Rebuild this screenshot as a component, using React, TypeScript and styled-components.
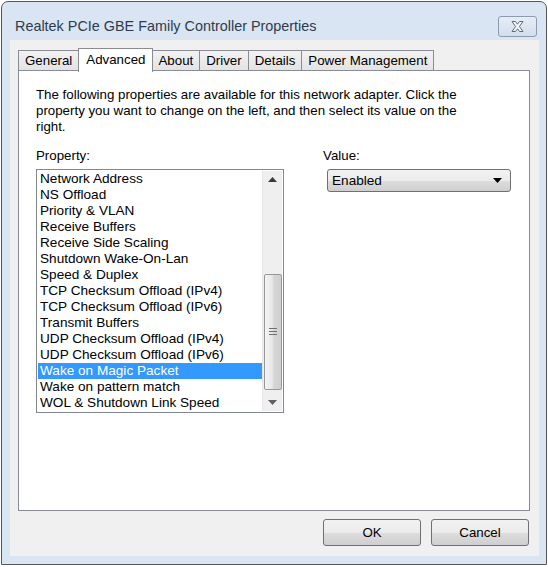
import React from 'react';
import styled, { createGlobalStyle } from 'styled-components';

const Global = createGlobalStyle`
  html, body {
    margin: 0;
    padding: 0;
    background: #ffffff;
  }
  body {
    font-family: "Liberation Sans", Arial, sans-serif;
  }
`;

const Window = styled.div`
  box-sizing: border-box;
  margin: 1px 0 0 1px;
  width: 546px;
  height: 564px;
  border: 1px solid #565656;
  border-radius: 7px 7px 0 0;
  background: #d9e5f3;
  display: flex;
  flex-direction: column;
  padding: 0 7px 8px 8px;
`;

const TitleBar = styled.div`
  height: 38px;
  display: flex;
  align-items: center;
  justify-content: space-between;
  padding-left: 5px;
`;

const Title = styled.span`
  font-size: 14.4px;
  color: #2f3b4c;
  margin-top: 9px;
`;

const CloseButton = styled.div`
  box-sizing: border-box;
  width: 39px;
  height: 21px;
  margin-right: 2px;
  margin-top: 10px;
  border: 1px solid #8d9bb0;
  border-radius: 3px;
  background: linear-gradient(#e6edf6, #d3deeb);
  display: flex;
  align-items: center;
  justify-content: center;
`;

const Client = styled.div`
  flex: 1;
  background: #f0f0f0;
  display: flex;
  flex-direction: column;
  padding: 7px 8px 0 8px;
`;

const TabRow = styled.div`
  display: flex;
  align-items: flex-end;
  height: 24px;
  position: relative;
  z-index: 1;
`;

const Tab = styled.div<{ $active?: boolean }>`
  box-sizing: border-box;
  height: ${(p) => (p.$active ? '24px' : '21px')};
  padding: 0 ${(p) => (p.$active ? '7px' : '6px')};
  margin: ${(p) => (p.$active ? '0 -1px -1px' : '0')};
  border: 1px solid #898c95;
  border-bottom: ${(p) => (p.$active ? 'none' : '1px solid #898c95')};
  border-left-width: ${(p) => (p.$active ? '1px' : '0')};
  background: ${(p) => (p.$active ? '#ffffff' : 'linear-gradient(#f2f2f2, #e3e3e3)')};
  font-size: 13.3px;
  color: #000;
  display: flex;
  align-items: ${(p) => (p.$active ? 'flex-start' : 'center')};
  padding-top: ${(p) => (p.$active ? '3px' : '0')};
  position: relative;
  z-index: ${(p) => (p.$active ? 2 : 1)};
  &:first-child {
    border-left-width: 1px;
  }
`;

const Panel = styled.div`
  box-sizing: border-box;
  width: 512px;
  height: 441px;
  background: #ffffff;
  border: 1px solid #898c95;
  margin-top: -1px;
  padding: 16px 18px 0 17px;
`;

const Description = styled.p`
  margin: 0;
  font-size: 13.3px;
  line-height: 16px;
  color: #000;
  width: 450px;
`;

const Columns = styled.div`
  display: flex;
  margin-top: 13px;
`;

const LeftCol = styled.div`
  width: 289px;
`;

const RightCol = styled.div`
  padding-top: 0;
`;

const Label = styled.div`
  font-size: 13.3px;
  line-height: 16px;
  color: #000;
  margin-bottom: 5px;
`;

const ListBox = styled.div`
  box-sizing: border-box;
  width: 248px;
  height: 244px;
  border: 1px solid #828790;
  display: flex;
  padding: 1px;
`;

const Items = styled.div`
  flex: 1;
  display: flex;
  flex-direction: column;
`;

const Item = styled.div<{ $selected?: boolean }>`
  height: 16px;
  line-height: 16px;
  font-size: 13.6px;
  padding-left: 2px;
  color: ${(p) => (p.$selected ? '#ffffff' : '#000000')};
  background: ${(p) => (p.$selected ? '#3399ff' : 'transparent')};
  white-space: nowrap;
`;

const ScrollBar = styled.div`
  width: 19px;
  background: #efefef;
  border-left: 1px solid #e6e6e6;
  display: flex;
  flex-direction: column;
  align-items: center;
`;

const ArrowCell = styled.div`
  height: 17px;
  width: 100%;
  display: flex;
  align-items: center;
  justify-content: center;
`;

const Track = styled.div`
  flex: 1;
  width: 100%;
  display: flex;
  flex-direction: column;
  justify-content: flex-end;
  align-items: center;
  padding-bottom: 4px;
`;

const Thumb = styled.div`
  box-sizing: border-box;
  width: 18px;
  height: 116px;
  border: 1px solid #979797;
  border-radius: 2px;
  background: linear-gradient(90deg, #f4f4f4 0%, #e8e8e8 45%, #d6d6d6 55%, #cfcfcf 100%);
  display: flex;
  align-items: center;
  justify-content: center;
`;

const Select = styled.div`
  box-sizing: border-box;
  width: 184px;
  height: 23px;
  margin-left: 4px;
  border: 1px solid #707070;
  border-radius: 3px;
  background: linear-gradient(#f2f2f2 0%, #ebebeb 50%, #dddddd 51%, #cfcfcf 100%);
  display: flex;
  align-items: center;
  justify-content: space-between;
  padding: 0 8px 0 4px;
  font-size: 13.6px;
  color: #000;
`;

const ButtonRow = styled.div`
  display: flex;
  justify-content: flex-end;
  gap: 10px;
  padding: 8px 2px 0 0;
`;

const Button = styled.div`
  box-sizing: border-box;
  width: 98px;
  height: 27px;
  border: 1px solid #707070;
  border-radius: 3px;
  background: linear-gradient(#f2f2f2 0%, #ebebeb 50%, #dddddd 51%, #cfcfcf 100%);
  display: flex;
  align-items: center;
  justify-content: center;
  font-size: 13.3px;
  color: #000;
`;

const UpArrow = () => (
  <svg width="9" height="5" viewBox="0 0 9 5">
    <path d="M0 5 L4.5 0 L9 5 Z" fill="#3a3a3a" />
  </svg>
);

const DownArrow = ({ color = '#606060' }: { color?: string }) => (
  <svg width="9" height="5" viewBox="0 0 9 5">
    <path d="M0 0 L9 0 L4.5 5 Z" fill={color} />
  </svg>
);

const Grip = () => (
  <svg width="8" height="8" viewBox="0 0 8 8">
    <path d="M0 0.5 H8 M0 3.5 H8 M0 6.5 H8" stroke="#6f6f6f" strokeWidth="1" />
  </svg>
);

const CloseGlyph = () => (
  <svg width="15" height="13" viewBox="0 0 15 13">
    <path
      d="M2 1.5 L5.5 1.5 L7.5 4.2 L9.5 1.5 L13 1.5 L9.4 6.5 L13 11.5 L9.5 11.5 L7.5 8.8 L5.5 11.5 L2 11.5 L5.6 6.5 Z"
      fill="#f7f8fa"
      stroke="#5f6b7c"
      strokeWidth="1"
      strokeLinejoin="round"
    />
  </svg>
);

const tabs = ['General', 'Advanced', 'About', 'Driver', 'Details', 'Power Management'];

const properties = [
  'Network Address',
  'NS Offload',
  'Priority & VLAN',
  'Receive Buffers',
  'Receive Side Scaling',
  'Shutdown Wake-On-Lan',
  'Speed & Duplex',
  'TCP Checksum Offload (IPv4)',
  'TCP Checksum Offload (IPv6)',
  'Transmit Buffers',
  'UDP Checksum Offload (IPv4)',
  'UDP Checksum Offload (IPv6)',
  'Wake on Magic Packet',
  'Wake on pattern match',
  'WOL & Shutdown Link Speed',
];

const App = () => {
  return (
    <>
      <Global />
      <Window>
        <TitleBar>
          <Title>Realtek PCIe GBE Family Controller Properties</Title>
          <CloseButton>
            <CloseGlyph />
          </CloseButton>
        </TitleBar>
        <Client>
          <TabRow>
            {tabs.map((t) => (
              <Tab key={t} $active={t === 'Advanced'}>
                {t}
              </Tab>
            ))}
          </TabRow>
          <Panel>
            <Description>
              The following properties are available for this network adapter. Click the
              property you want to change on the left, and then select its value on the
              right.
            </Description>
            <Columns>
              <LeftCol>
                <Label>Property:</Label>
                <ListBox>
                  <Items>
                    {properties.map((p) => (
                      <Item key={p} $selected={p === 'Wake on Magic Packet'}>
                        {p}
                      </Item>
                    ))}
                  </Items>
                  <ScrollBar>
                    <ArrowCell>
                      <UpArrow />
                    </ArrowCell>
                    <Track>
                      <Thumb>
                        <Grip />
                      </Thumb>
                    </Track>
                    <ArrowCell>
                      <DownArrow />
                    </ArrowCell>
                  </ScrollBar>
                </ListBox>
              </LeftCol>
              <RightCol>
                <Label>Value:</Label>
                <Select>
                  <span>Enabled</span>
                  <DownArrow color="#000000" />
                </Select>
              </RightCol>
            </Columns>
          </Panel>
          <ButtonRow>
            <Button>OK</Button>
            <Button>Cancel</Button>
          </ButtonRow>
        </Client>
      </Window>
    </>
  );
};

export default App;
